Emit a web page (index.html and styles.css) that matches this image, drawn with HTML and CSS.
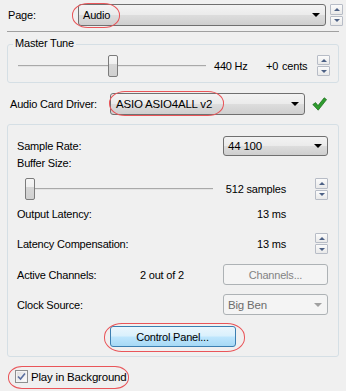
FILE: index.html
```html
<!DOCTYPE html>
<html lang="en">
<head>
    <meta charset="UTF-8">
    <meta name="viewport" content="width=device-width, initial-scale=1.0">
    <title>Audio Settings</title>
    <link rel="stylesheet" href="styles.css">
</head>
<body>

<div class="top-row">
    <span class="page-lbl">Page:</span>
    <div class="combo page-combo">
        <span class="combo-text">Audio</span>
        <span class="arrow"></span>
        <span class="mark mark-page"></span>
    </div>
    <div class="spin spin-page">
        <span class="spin-btn"><span class="up"></span></span>
        <span class="spin-btn"><span class="down"></span></span>
    </div>
</div>

<div class="sep"></div>

<div class="group tune">
    <span class="legend">Master Tune</span>
    <div class="tune-row">
        <div class="slider tune-slider">
            <div class="track"></div>
            <div class="thumb tune-thumb"></div>
        </div>
        <span class="hz">440 Hz</span>
        <span class="cents">+0 <span class="cents-unit">cents</span></span>
        <div class="spin">
            <span class="spin-btn"><span class="up"></span></span>
            <span class="spin-btn"><span class="down"></span></span>
        </div>
    </div>
</div>

<div class="driver-row">
    <span class="driver-lbl">Audio Card Driver:</span>
    <div class="combo driver-combo">
        <span class="combo-text">ASIO ASIO4ALL v2</span>
        <span class="arrow"></span>
        <span class="mark mark-driver"></span>
    </div>
    <svg class="ok" width="15" height="14" viewBox="0 0 15 14">
        <polygon points="0.8,7.6 3.6,5.6 6,8.6 12.2,0.8 14.6,2.6 6.2,13.2" fill="#2f9d2f" stroke="#1a6a1a" stroke-width="0.7" stroke-linejoin="round"/>
    </svg>
</div>

<div class="group audio">
    <div class="sr-row">
        <span class="lbl">Sample Rate:</span>
        <div class="combo small-combo">
            <span class="combo-text">44 100</span>
            <span class="arrow"></span>
        </div>
    </div>
    <div class="buf-lbl">Buffer Size:</div>
    <div class="buf-row">
        <div class="slider buf-slider">
            <div class="track"></div>
            <div class="thumb buf-thumb"></div>
        </div>
        <span class="value">512 samples</span>
        <div class="spin">
            <span class="spin-btn"><span class="up"></span></span>
            <span class="spin-btn"><span class="down"></span></span>
        </div>
    </div>
    <div class="out-row">
        <span class="wide-lbl">Output Latency:</span>
        <span class="value">13 ms</span>
    </div>
    <div class="lat-row">
        <span class="wide-lbl">Latency Compensation:</span>
        <span class="value">13 ms</span>
        <div class="spin">
            <span class="spin-btn"><span class="up"></span></span>
            <span class="spin-btn"><span class="down"></span></span>
        </div>
    </div>
    <div class="ch-row">
        <span class="ch-lbl">Active Channels:</span>
        <span class="ch-val">2 out of 2</span>
        <span class="btn disabled">Channels...</span>
    </div>
    <div class="clk-row">
        <span class="lbl">Clock Source:</span>
        <div class="combo small-combo disabled">
            <span class="combo-text">Big Ben</span>
            <span class="arrow"></span>
        </div>
    </div>
    <div class="cp-row">
        <span class="btn default">Control Panel...
            <span class="mark mark-cp"></span>
        </span>
    </div>
</div>

<div class="play-row">
    <span class="checkbox">
        <svg width="9" height="9" viewBox="0 0 9 9">
            <path d="M1 4.5 L3.5 7 L8 1.5" fill="none" stroke="#5a6f9f" stroke-width="1.6"/>
        </svg>
    </span>
    <span class="play-lbl">Play in Background</span>
    <span class="mark mark-play"></span>
</div>

</body>
</html>
```

FILE: styles.css
```css
body {
    margin: 0;
    width: 346px;
    height: 391px;
    overflow: hidden;
    background-color: #f0f0f0;
    color: #000;
    font-family: "Liberation Sans", Arial, sans-serif;
    font-size: 11px;
    letter-spacing: -0.2px;
}

/* top page selector */
.top-row {
    display: flex;
    align-items: center;
    height: 22px;
    margin: 4px 0 0 8px;
}

.page-lbl {
    width: 70px;
}

.combo {
    position: relative;
    display: flex;
    align-items: center;
    box-sizing: border-box;
    height: 22px;
    padding-left: 4px;
    border: 1px solid #707070;
    border-radius: 3px;
    background: linear-gradient(#f3f3f3 0, #ebebeb 48%, #dddddd 50%, #cfcfcf 100%);
}

.combo .arrow {
    margin-left: auto;
    margin-right: 5px;
    width: 0;
    height: 0;
    border-left: 4px solid transparent;
    border-right: 4px solid transparent;
    border-top: 4px solid #000;
}

.page-combo {
    width: 248px;
}

.combo.disabled {
    border-color: #adb2b5;
    background: #f4f4f4;
    color: #6d6d6d;
}

.combo.disabled .arrow {
    border-top-color: #a0a0a0;
}

/* spin buttons */
.spin {
    display: flex;
    flex-direction: column;
    gap: 1px;
    width: 13px;
    height: 21px;
}

.spin-page {
    height: 22px;
    margin-left: 4px;
}

.spin-btn {
    flex: 1;
    display: flex;
    align-items: center;
    justify-content: center;
    box-sizing: border-box;
    border: 1px solid #b7bcc6;
    border-radius: 1px;
    background: linear-gradient(#fbfbfb, #e9e9e9);
}

.up, .down {
    width: 0;
    height: 0;
    border-left: 3px solid transparent;
    border-right: 3px solid transparent;
}

.up {
    border-bottom: 3px solid #4d6185;
}

.down {
    border-top: 3px solid #4d6185;
}

.sep {
    margin: 5px 7px 0;
    border-top: 1px solid #a0a0a0;
}

/* group boxes */
.group {
    position: relative;
    box-sizing: border-box;
    margin: 0 7px;
    border: 1px solid #d5dfe5;
    border-radius: 3px;
}

.legend {
    position: absolute;
    top: -8px;
    left: 5px;
    padding: 0 2px;
    background-color: #f0f0f0;
}

.tune {
    height: 39px;
    margin-top: 12px;
    padding: 9px 0 0 10px;
}

.tune-row {
    display: flex;
    align-items: center;
    height: 23px;
}

/* trackbars */
.slider {
    position: relative;
    height: 22px;
}

.track {
    position: absolute;
    left: 0;
    right: 0;
    top: 10px;
    height: 1px;
    border-bottom: 1px solid #e4e4e4;
    background-color: #a9a9a9;
}

.thumb {
    position: absolute;
    top: 0;
    box-sizing: border-box;
    width: 10px;
    height: 22px;
    border: 1px solid #7b7b7b;
    border-radius: 2px;
    background: linear-gradient(#f6f6f6 0, #f0f0f0 40%, #d6d6d6 42%, #d0d0d0 100%);
}

.tune-slider {
    width: 188px;
}

.tune-thumb {
    left: 90px;
}

.hz {
    width: 52px;
    margin-left: 8px;
}

.cents {
    width: 51px;
}

.cents-unit {
    margin-left: 1px;
}

/* driver */
.driver-row {
    display: flex;
    align-items: center;
    height: 22px;
    margin: 10px 0 0 10px;
}

.driver-lbl {
    width: 100px;
}

.driver-combo {
    width: 195px;
    padding-left: 5px;
    font-size: 11.5px;
}

.ok {
    margin-left: 7px;
}

/* audio box */
.audio {
    display: flex;
    flex-direction: column;
    height: 233px;
    margin-top: 9px;
    padding: 0 10px 0 9px;
}

.sr-row, .clk-row {
    display: flex;
    align-items: center;
    justify-content: space-between;
    height: 21px;
}

.sr-row {
    height: 20px;
    margin-top: 11px;
}

.small-combo {
    width: 105px;
    height: 100%;
    font-size: 11.5px;
}

.buf-lbl {
    height: 13px;
    margin-top: 1px;
    line-height: 13px;
}

.buf-row, .out-row, .lat-row, .ch-row {
    display: flex;
    align-items: center;
}

.buf-row {
    height: 22px;
    margin-top: 8px;
}

.buf-slider {
    width: 188px;
    margin-left: 8px;
}

.buf-thumb {
    left: 0;
}

.value {
    width: 73px;
    text-align: right;
}

.buf-row .spin, .lat-row .spin {
    margin-left: 29px;
}

.buf-row .spin {
    height: 22px;
}

.out-row {
    height: 19px;
    margin-top: 4px;
}

.wide-lbl {
    width: 196px;
}

.lat-row {
    height: 21px;
    margin-top: 10px;
}

.ch-row {
    height: 21px;
    margin-top: 10px;
}

.ch-lbl {
    width: 123px;
}

.ch-val {
    width: 83px;
}

.btn {
    position: relative;
    display: flex;
    align-items: center;
    justify-content: center;
    box-sizing: border-box;
    height: 21px;
    border: 1px solid #707070;
    border-radius: 3px;
}

.btn.disabled {
    width: 105px;
    height: 100%;
    border-color: #adb2b5;
    background: #f4f4f4;
    color: #838383;
}

.clk-row {
    margin-top: 9px;
}

.cp-row {
    display: flex;
    justify-content: center;
    height: 21px;
    margin-top: 11px;
}

.btn.default {
    width: 126px;
    border-color: #3c7fb1;
    background: linear-gradient(#eaf6fd 0, #d9f0fc 48%, #bee6fd 52%, #a7d9f5 100%);
}

/* checkbox */
.play-row {
    position: relative;
    display: flex;
    align-items: center;
    height: 13px;
    margin: 13px 0 0 15px;
}

.checkbox {
    display: flex;
    align-items: center;
    justify-content: center;
    box-sizing: border-box;
    width: 13px;
    height: 13px;
    border: 1px solid #8e8f8f;
    background: linear-gradient(135deg, #dcdcdc, #ffffff);
    box-shadow: inset 0 0 0 1px #f4f4f4;
}

.play-lbl {
    margin-left: 3px;
    font-size: 11.5px;
}

/* red highlight rings */
.mark {
    position: absolute;
    box-sizing: border-box;
    border: 1.5px solid #e95559;
    pointer-events: none;
}

.mark-page {
    left: -7px;
    top: -2px;
    width: 48px;
    height: 25px;
    border-radius: 16px / 12px;
}

.mark-driver {
    left: -2px;
    top: -3px;
    width: 115px;
    height: 25px;
    border-radius: 16px / 12px;
}

.mark-cp {
    left: -7px;
    top: -4px;
    width: 141px;
    height: 29px;
    border-radius: 18px / 14px;
}

.mark-play {
    left: -7px;
    top: -4px;
    width: 121px;
    height: 23px;
    border-radius: 14px / 11px;
}
```
